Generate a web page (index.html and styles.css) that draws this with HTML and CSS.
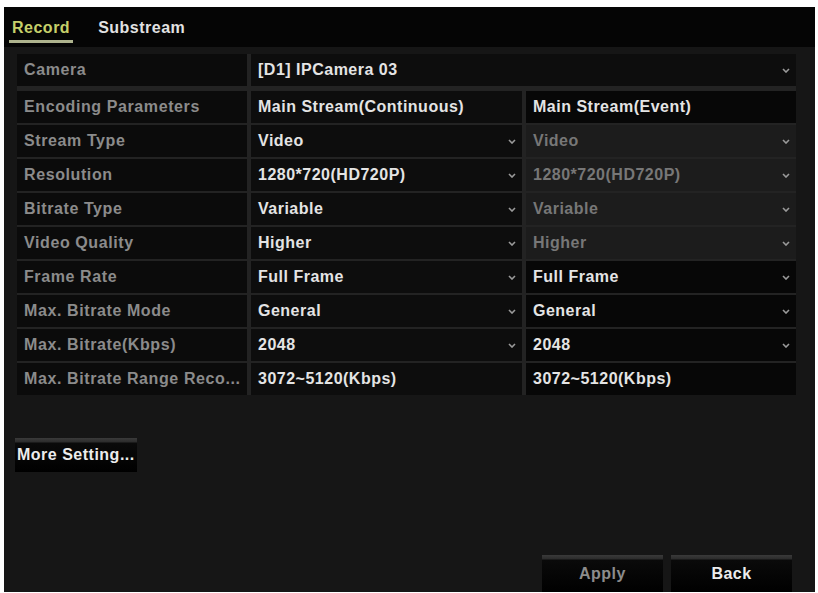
FILE: index.html
```html
<!DOCTYPE html>
<html lang="en">
<head>
	<meta charset="UTF-8">
	<title>Record</title>
	<link rel="stylesheet" href="styles.css">
</head>
<body>
	<div class="screen">
		<div class="tabs">
			<div class="tab active">Record</div>
			<div class="tab">Substream</div>
		</div>

		<div class="content">
			<div class="table">
				<div class="row camera">
					<div class="cell label">Camera</div>
					<div class="cell value wide">[D1] IPCamera 03<svg class="arrow" width="8" height="5" viewBox="0 0 8 5"><path d="M1 1 L4 4 L7 1"/></svg></div>
				</div>
				<div class="row">
					<div class="cell label">Encoding Parameters</div>
					<div class="cell value">Main Stream(Continuous)</div>
					<div class="cell value dark">Main Stream(Event)</div>
				</div>
				<div class="row">
					<div class="cell label">Stream Type</div>
					<div class="cell value">Video<svg class="arrow" width="8" height="5" viewBox="0 0 8 5"><path d="M1 1 L4 4 L7 1"/></svg></div>
					<div class="cell value off">Video<svg class="arrow" width="8" height="5" viewBox="0 0 8 5"><path d="M1 1 L4 4 L7 1"/></svg></div>
				</div>
				<div class="row">
					<div class="cell label">Resolution</div>
					<div class="cell value">1280*720(HD720P)<svg class="arrow" width="8" height="5" viewBox="0 0 8 5"><path d="M1 1 L4 4 L7 1"/></svg></div>
					<div class="cell value off">1280*720(HD720P)<svg class="arrow" width="8" height="5" viewBox="0 0 8 5"><path d="M1 1 L4 4 L7 1"/></svg></div>
				</div>
				<div class="row">
					<div class="cell label">Bitrate Type</div>
					<div class="cell value">Variable<svg class="arrow" width="8" height="5" viewBox="0 0 8 5"><path d="M1 1 L4 4 L7 1"/></svg></div>
					<div class="cell value off">Variable<svg class="arrow" width="8" height="5" viewBox="0 0 8 5"><path d="M1 1 L4 4 L7 1"/></svg></div>
				</div>
				<div class="row">
					<div class="cell label">Video Quality</div>
					<div class="cell value">Higher<svg class="arrow" width="8" height="5" viewBox="0 0 8 5"><path d="M1 1 L4 4 L7 1"/></svg></div>
					<div class="cell value off">Higher<svg class="arrow" width="8" height="5" viewBox="0 0 8 5"><path d="M1 1 L4 4 L7 1"/></svg></div>
				</div>
				<div class="row">
					<div class="cell label">Frame Rate</div>
					<div class="cell value">Full Frame<svg class="arrow" width="8" height="5" viewBox="0 0 8 5"><path d="M1 1 L4 4 L7 1"/></svg></div>
					<div class="cell value dark">Full Frame<svg class="arrow" width="8" height="5" viewBox="0 0 8 5"><path d="M1 1 L4 4 L7 1"/></svg></div>
				</div>
				<div class="row">
					<div class="cell label">Max. Bitrate Mode</div>
					<div class="cell value">General<svg class="arrow" width="8" height="5" viewBox="0 0 8 5"><path d="M1 1 L4 4 L7 1"/></svg></div>
					<div class="cell value dark">General<svg class="arrow" width="8" height="5" viewBox="0 0 8 5"><path d="M1 1 L4 4 L7 1"/></svg></div>
				</div>
				<div class="row">
					<div class="cell label">Max. Bitrate(Kbps)</div>
					<div class="cell value">2048<svg class="arrow" width="8" height="5" viewBox="0 0 8 5"><path d="M1 1 L4 4 L7 1"/></svg></div>
					<div class="cell value dark">2048<svg class="arrow" width="8" height="5" viewBox="0 0 8 5"><path d="M1 1 L4 4 L7 1"/></svg></div>
				</div>
				<div class="row">
					<div class="cell label">Max. Bitrate Range Reco...</div>
					<div class="cell value">3072~5120(Kbps)</div>
					<div class="cell value dark">3072~5120(Kbps)</div>
				</div>
			</div>

			<div class="btn more">More Setting...</div>

			<div class="footer">
				<div class="btn apply">Apply</div>
				<div class="btn back">Back</div>
			</div>
		</div>
	</div>
</body>
</html>
```

FILE: styles.css
```css
* {
    box-sizing: border-box;
}
body {
    margin: 0;
    background: #fff;
    font-family: "Liberation Sans", Arial, sans-serif;
    font-weight: bold;
    font-size: 16px;
    letter-spacing: 0.5px;
}
.screen {
    margin: 7px 0 0 4px;
    width: 811px;
    height: 585px;
    background: #161616;
    display: flex;
    flex-direction: column;
    overflow: hidden;
}

/* tab bar */
.tabs {
    height: 40px;
    flex-shrink: 0;
    background: #050505;
    display: flex;
    gap: 22px;
    padding-left: 5px;
}
.tab {
    height: 36px;
    padding: 9px 3px 0;
    display: flex;
    align-items: center;
    color: #e2e2e2;
    border-bottom: 3px solid transparent;
}
.tab.active {
    color: #c6d06a;
    border-bottom-color: #aeb38e;
}

/* table */
.content {
    flex: 1;
    display: flex;
    flex-direction: column;
    padding: 7px 19px 0 13px;
}
.table {
    display: flex;
    flex-direction: column;
    gap: 2px;
    background: #232323;
}
.row {
    display: grid;
    grid-template-columns: 230px 271px 270px;
    column-gap: 4px;
}
.row.camera {
    margin-bottom: 3px;
}
.cell {
    height: 32px;
    display: flex;
    align-items: center;
    padding: 0 6px 0 7px;
    background: #0d0d0d;
    white-space: nowrap;
    overflow: hidden;
}
.label {
    color: #8b8b8b;
    background: #0b0b0b;
    letter-spacing: 0.6px;
}
.value {
    color: #e4e4e4;
}
.value.wide {
    grid-column: 2 / 4;
}
.value.dark {
    background: #070707;
}
.value.off {
    color: #777;
    background: #1c1c1c;
}
.arrow {
    margin-left: auto;
    fill: none;
    stroke: #9a9a9a;
    stroke-width: 1.6;
}

/* buttons */
.btn {
    height: 34px;
    display: flex;
    align-items: center;
    background: linear-gradient(#3a3a3a 0, #2c2c2c 4px, #0a0a0a 5px, #000 100%);
    color: #ececec;
}
.more {
    width: 122px;
    margin: 43px 0 0 -2px;
    padding-left: 2px;
}
.footer {
    margin-top: auto;
    display: flex;
    justify-content: flex-end;
    gap: 8px;
    padding-right: 4px;
}
.apply, .back {
    width: 121px;
    height: 37px;
    justify-content: center;
}
.apply {
    color: #8c8c8c;
}
```
